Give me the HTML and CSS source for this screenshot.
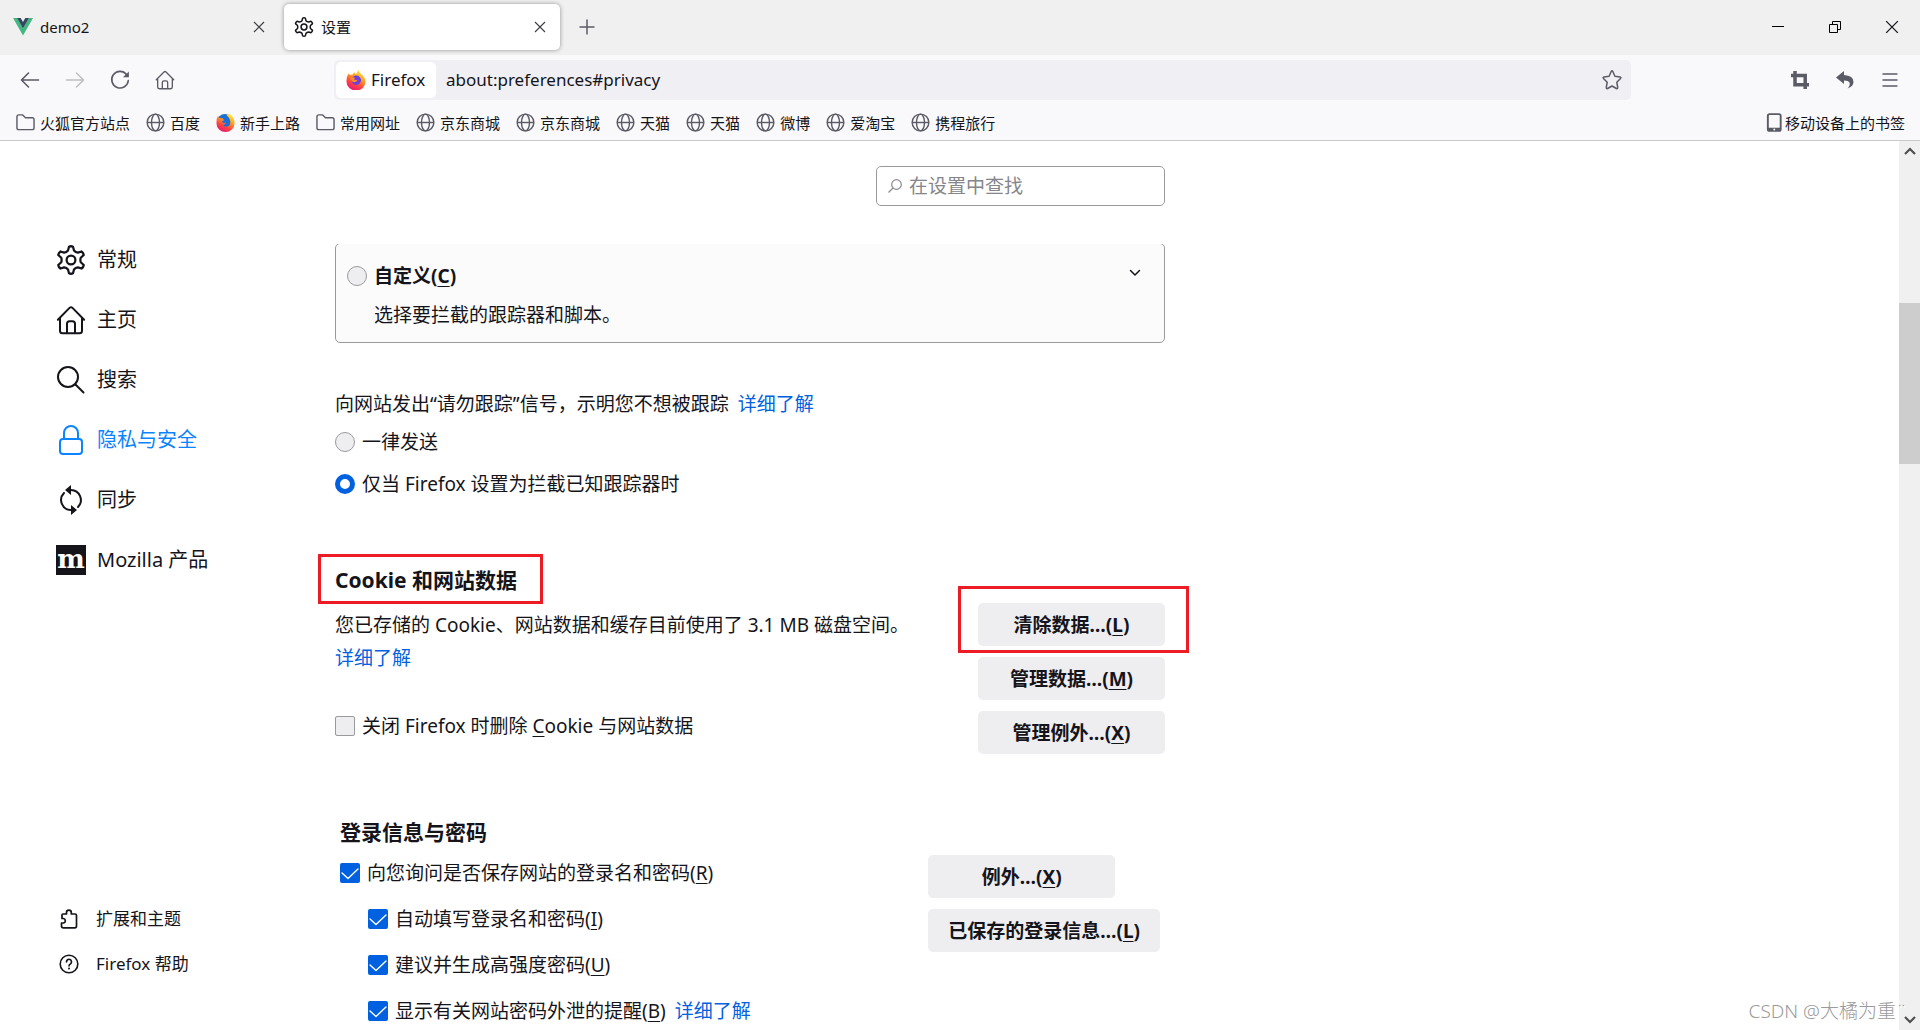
FILE: index.html
```html
<!DOCTYPE html>
<html lang="zh-CN">
<head>
<meta charset="utf-8">
<title>设置</title>
<link rel="stylesheet" href="styles.css">
</head>
<body>
<svg class="defs" aria-hidden="true">
  <defs>
    <linearGradient id="flame" x1="0.8" y1="0" x2="0.3" y2="1">
      <stop offset="0" stop-color="#fff04a"/><stop offset="0.35" stop-color="#ffa722"/><stop offset="0.7" stop-color="#ff4340"/><stop offset="1" stop-color="#e5157c"/>
    </linearGradient>
    <symbol id="gear" viewBox="0 0 24 24"><path fill="none" stroke="currentColor" stroke-width="1.8" stroke-linejoin="round" d="M10.4 1.4Q12 .6 13.6 1.4L14.4 4.4Q15.6 5.8 17.5 6.1L20.4 5.2Q22 6.3 22.2 8L19.8 10.2Q19.2 12 19.8 13.8L22.2 16Q22 17.7 20.4 18.8L17.5 17.9Q15.6 18.2 14.4 19.6L13.6 22.6Q12 23.4 10.4 22.6L9.6 19.6Q8.400 18.2 6.500 17.9L3.600 18.8Q2 17.7 1.800 16L4.200 13.8Q4.800 12 4.200 10.200L1.800 8Q2 6.300 3.600 5.200L6.500 6.100Q8.400 5.800 9.600 4.400Z"/><circle cx="12" cy="12" r="3.500" fill="none" stroke="currentColor" stroke-width="1.800"/></symbol>
    <symbol id="home" viewBox="0 0 24 24"><path fill="none" stroke="currentColor" stroke-width="1.600" stroke-linecap="round" stroke-linejoin="round" d="M1.500 11.800 10.800 2.300Q12 1.200 13.200 2.300L22.500 11.800M3.200 10.500V20.500Q3.200 22.500 5.200 22.500H18.800Q20.800 22.500 20.800 20.500V10.500M8.800 22V15Q8.800 13 10.800 13H13.200Q15.200 13 15.200 15V22"/></symbol>
    <symbol id="globe" viewBox="0 0 20 20"><g fill="none" stroke="#5b5b66" stroke-width="1.500"><circle cx="10" cy="10" r="8.800"/><ellipse cx="10" cy="10" rx="4.200" ry="8.800"/><path d="M1.500 10H18.500"/></g></symbol>
    <symbol id="folder" viewBox="0 0 20 20"><path fill="none" stroke="#5b5b66" stroke-width="1.500" stroke-linejoin="round" d="M1 4Q1 2 3 2H7L10 5H17Q19 5 19 7V15.500Q19 17.500 17 17.500H3Q1 17.500 1 15.500Z"/></symbol>
    <symbol id="cross" viewBox="0 0 12 12"><path fill="none" stroke="currentColor" stroke-width="1.100" d="M1 1 11 11M11 1 1 11"/></symbol>
    <symbol id="firefox" viewBox="0 0 20 20"><path fill="url(#flame)" d="M2.500 3.500Q3.500 4.200 4 5.200 5 4.400 6.500 4.500 7.500 2.600 9 2.200 8.700 3.600 10 4.500 11 2 12.500 0 13 2.500 15.500 4.500 19.500 7.500 19.500 12A9.500 8.800 0 0 1 .5 11.500Q.4 6.500 2.500 3.500Z"/><circle cx="10.300" cy="10.300" r="4.700" fill="#6b3fe0"/><path fill="#ff8a1e" d="M4.500 8Q7 6.600 9.500 8.300 8 8.600 8 9.600 9.500 10.500 11.500 9.500 11 12.500 8 12.200 5.200 12 4.500 8Z"/></symbol>
    <symbol id="firefox-blue" viewBox="0 0 20 20"><circle cx="9.500" cy="9.500" r="8.500" fill="#1b6fd6"/><path fill="url(#flame)" d="M2 3Q2.500 4.500 3.500 5.200L7 5.500 8.500 7.500Q6 8 6.300 9.500 8 11 10.500 10 10 12.500 7.500 12.500 9 15 12 14.300 15.500 13 15 8.500 14.500 5 11 2 13 .8 14 .8 19.800 4.500 19.500 11A9.500 9 0 0 1 .5 11Q0 6.500 2 3Z"/></symbol>
  </defs>
</svg>

<header class="chrome">
  <div class="tabbar">
    <div class="tab">
      <svg class="i20" viewBox="0 0 20 20" aria-hidden="true"><path fill="#41b883" d="M0 1H4L10 11.500 16 1H20L10 18.500Z"/><path fill="#35495e" d="M4 1H7.700L10 5 12.300 1H16L10 11.500Z"/></svg>
      <span class="tab-title">demo2</span>
      <button class="bare tab-close" aria-label="关闭 demo2"><svg class="i12" aria-hidden="true"><use href="#cross"/></svg></button>
    </div>
    <div class="tab tab-active">
      <svg class="i20" aria-hidden="true"><use href="#gear"/></svg>
      <span class="tab-title">设置</span>
      <button class="bare tab-close" aria-label="关闭设置"><svg class="i12" aria-hidden="true"><use href="#cross"/></svg></button>
    </div>
    <button class="bare newtab" aria-label="新标签页"><svg class="i16" viewBox="0 0 16 16"><path fill="none" stroke="#5b5b66" stroke-width="1.500" d="M8 0.500V15.500M.5 8H15.500"/></svg></button>
    <div class="window-controls">
      <button class="bare" aria-label="最小化"><svg class="i14" viewBox="0 0 14 14"><path stroke="#000" d="M1 6.500H13"/></svg></button>
      <button class="bare" aria-label="还原"><svg class="i14" viewBox="0 0 14 14"><path fill="none" stroke="#000" d="M1.500 4.500H9.500V12.500H1.500ZM4.500 4.500V1.500H12.500V9.500H9.500"/></svg></button>
      <button class="bare" aria-label="关闭"><svg class="i14" aria-hidden="true"><use href="#cross"/></svg></button>
    </div>
  </div>

  <div class="toolbar">
    <div class="nav-buttons">
      <button class="bare" aria-label="后退"><svg class="i20" viewBox="0 0 20 20"><path fill="none" stroke="#5b5b66" stroke-width="1.600" stroke-linecap="round" stroke-linejoin="round" d="M18.500 10H1.500M8.500 3 1.500 10 8.500 17"/></svg></button>
      <button class="bare" aria-label="前进" disabled><svg class="i20" viewBox="0 0 20 20"><path fill="none" stroke="#bfbfc4" stroke-width="1.600" stroke-linecap="round" stroke-linejoin="round" d="M1.500 10H18.500M11.500 3 18.500 10 11.500 17"/></svg></button>
      <button class="bare" aria-label="刷新"><svg class="i20" viewBox="0 0 20 20"><path fill="none" stroke="#5b5b66" stroke-width="1.600" stroke-linecap="round" d="M16.500 4.500A8.300 8.300 0 1 0 18.300 10.500"/><path fill="#5b5b66" d="M18.900 1.500V7.300H13Z"/></svg></button>
      <button class="bare" aria-label="主页"><svg class="i20" aria-hidden="true"><use href="#home"/></svg></button>
    </div>
    <div class="urlbar">
      <button class="identity"><svg class="i20" aria-hidden="true"><use href="#firefox"/></svg>Firefox</button>
      <input class="url" type="text" aria-label="地址" value="about:preferences#privacy">
      <button class="bare" aria-label="添加书签"><svg class="i20" viewBox="0 0 20 20"><path fill="none" stroke="#5b5b66" stroke-width="1.500" stroke-linejoin="round" d="M9.200 1.500Q10 .2 10.800 1.500L12.900 6.200 18 6.900Q19.600 7.300 18.500 8.500L14.800 12.200 15.700 17.500Q15.800 19 14.400 18.500L10 16 5.600 18.500Q4.200 19 4.300 17.500L5.200 12.200 1.500 8.500Q.4 7.300 2 6.900L7.100 6.200Z"/></svg></button>
    </div>
    <div class="tools">
      <button class="bare" aria-label="截图"><svg class="i20" viewBox="0 0 20 20"><path fill="none" stroke="#5b5b66" stroke-width="3.500" d="M1 5.500H15.200V19M5 1V14.800H19"/></svg></button>
      <button class="bare" aria-label="撤销"><svg class="i20" viewBox="0 0 20 20"><path fill="#5b5b66" d="M1 7.500 9 1V5Q18.500 5.500 18.500 12 18.300 16.500 12.500 18.500 15.500 15.500 14.500 12.500 13.500 10.500 9 10.500V14Z"/></svg></button>
      <button class="bare" aria-label="菜单"><svg class="i20" viewBox="0 0 20 20"><path stroke="#5b5b66" stroke-width="1.400" stroke-linecap="round" d="M3 4H17M3 10H17M3 16H17"/></svg></button>
    </div>
  </div>

  <nav class="bookmarks" aria-label="书签">
    <a href="#"><svg aria-hidden="true"><use href="#folder"/></svg>火狐官方站点</a>
    <a href="#"><svg aria-hidden="true"><use href="#globe"/></svg>百度</a>
    <a href="#"><svg aria-hidden="true"><use href="#firefox-blue"/></svg>新手上路</a>
    <a href="#"><svg aria-hidden="true"><use href="#folder"/></svg>常用网址</a>
    <a href="#"><svg aria-hidden="true"><use href="#globe"/></svg>京东商城</a>
    <a href="#"><svg aria-hidden="true"><use href="#globe"/></svg>京东商城</a>
    <a href="#"><svg aria-hidden="true"><use href="#globe"/></svg>天猫</a>
    <a href="#"><svg aria-hidden="true"><use href="#globe"/></svg>天猫</a>
    <a href="#"><svg aria-hidden="true"><use href="#globe"/></svg>微博</a>
    <a href="#"><svg aria-hidden="true"><use href="#globe"/></svg>爱淘宝</a>
    <a href="#"><svg aria-hidden="true"><use href="#globe"/></svg>携程旅行</a>
    <a href="#" class="mobile"><svg viewBox="0 0 20 20" aria-hidden="true"><rect x="3" y="1.200" width="13.500" height="17.600" rx="1.800" fill="none" stroke="#5b5b66" stroke-width="2"/><path fill="#5b5b66" d="M3 15.500H16.500V19H3Z"/><circle cx="9.750" cy="17.300" r="1" fill="#fff"/></svg>移动设备上的书签</a>
  </nav>
</header>

<div class="page">
  <aside class="sidebar">
    <nav class="categories" aria-label="类别">
      <a href="#"><svg class="i30" aria-hidden="true"><use href="#gear"/></svg>常规</a>
      <a href="#"><svg class="i30" aria-hidden="true"><use href="#home"/></svg>主页</a>
      <a href="#"><svg class="i30" viewBox="0 0 30 30" aria-hidden="true"><g fill="none" stroke="currentColor" stroke-width="2"><circle cx="12" cy="12" r="10"/><path stroke-linecap="round" d="M19.500 19.500 27.500 27.500"/></g></svg>搜索</a>
      <a href="#" class="selected"><svg class="i30" viewBox="0 0 30 30" aria-hidden="true"><g fill="none" stroke="currentColor" stroke-width="2"><rect x="4" y="14" width="22" height="15" rx="3"/><path d="M8 14V8A7 7 0 0 1 22 8V14"/></g></svg>隐私与安全</a>
      <a href="#"><svg class="i30" viewBox="0 0 30 30" aria-hidden="true"><g fill="none" stroke="currentColor" stroke-width="2" stroke-linecap="round"><path d="M15 5A10 10 0 0 1 22 22"/><path d="M15 25A10 10 0 0 1 8 8"/></g><path fill="currentColor" d="M15 0V10L9 5ZM15 20V30L21 25Z"/></svg>同步</a>
      <a href="#"><span class="moz" aria-hidden="true">m</span>Mozilla 产品</a>
    </nav>
    <nav class="support" aria-label="帮助">
      <a href="#"><svg class="i20" viewBox="0 0 20 20" aria-hidden="true"><path fill="none" stroke="currentColor" stroke-width="1.700" stroke-linejoin="round" d="M3 6Q3 5 4 5H7.500V3.500A2.400 2.400 0 0 1 12.300 3.500V5H16Q17.500 5 17.500 6.500V17Q17.500 18.800 15.800 18.800H4.500Q2.500 18.800 2.500 17V14H4.500A2.300 2.300 0 0 0 4.500 9.500H3Z"/></svg>扩展和主题</a>
      <a href="#"><svg class="i20" viewBox="0 0 20 20" aria-hidden="true"><g fill="none" stroke="currentColor" stroke-width="1.600"><circle cx="10" cy="10" r="8.800"/><path stroke-linecap="round" d="M7.500 8A2.500 2.500 0 1 1 11.500 9.800Q10 10.800 10 12"/></g><circle cx="10" cy="14.500" r="1" fill="currentColor"/></svg>Firefox 帮助</a>
    </nav>
  </aside>

  <main class="content">
    <div class="search-row">
      <label class="search">
        <svg class="i14" viewBox="0 0 14 14" aria-hidden="true"><g fill="none" stroke="#8a8a90" stroke-width="1.200"><circle cx="8.500" cy="5.500" r="4.800"/><path d="M5 9 .5 13.500"/></g></svg>
        <input type="search" placeholder="在设置中查找" aria-label="在设置中查找">
      </label>
    </div>
    <div class="scroll">
      <div class="column">
        <section class="card">
          <div class="card-head">
            <label class="option strong"><input type="radio" name="etp"><span>自定义(<u>C</u>)</span></label>
            <button class="bare" aria-label="展开"><svg class="i12" viewBox="0 0 12 12"><path fill="none" stroke="#15141a" stroke-width="1.500" stroke-linecap="round" stroke-linejoin="round" d="M1.500 3.500 6 8 10.500 3.500"/></svg></button>
          </div>
          <p class="card-desc">选择要拦截的跟踪器和脚本。</p>
        </section>

        <section class="dnt">
          <p>向网站发出“请勿跟踪”信号，示明您不想被跟踪<a class="link after" href="#">详细了解</a></p>
          <label class="option"><input type="radio" name="dnt"><span>一律发送</span></label>
          <label class="option"><input type="radio" name="dnt" checked><span>仅当 Firefox 设置为拦截已知跟踪器时</span></label>
        </section>

        <section class="cookies">
          <h2 class="marked">Cookie 和网站数据</h2>
          <div class="split">
            <div class="cookie-info">
              <p>您已存储的 Cookie、网站数据和缓存目前使用了 3.1 MB 磁盘空间。</p>
              <a class="link" href="#">详细了解</a>
              <label class="option"><input type="checkbox"><span>关闭 Firefox 时删除 <u>C</u>ookie 与网站数据</span></label>
            </div>
            <div class="buttons">
              <div class="marked"><button class="btn">清除数据…(<u>L</u>)</button></div>
              <button class="btn">管理数据…(<u>M</u>)</button>
              <button class="btn">管理例外…(<u>X</u>)</button>
            </div>
          </div>
        </section>

        <section class="logins">
          <h2>登录信息与密码</h2>
          <div class="split">
            <div class="login-options">
              <label class="option"><input type="checkbox" checked><span>向您询问是否保存网站的登录名和密码(<u>R</u>)</span></label>
              <label class="option sub"><input type="checkbox" checked><span>自动填写登录名和密码(<u>I</u>)</span></label>
              <label class="option sub"><input type="checkbox" checked><span>建议并生成高强度密码(<u>U</u>)</span></label>
              <div class="option-line">
                <label class="option sub"><input type="checkbox" checked><span>显示有关网站密码外泄的提醒(<u>B</u>)</span></label>
                <a class="link after" href="#">详细了解</a>
              </div>
            </div>
            <div class="buttons">
              <button class="btn">例外…(<u>X</u>)</button>
              <button class="btn">已保存的登录信息…(<u>L</u>)</button>
            </div>
          </div>
        </section>
      </div>
    </div>
  </main>

  <div class="scrollbar" aria-hidden="true">
    <svg class="i12" viewBox="0 0 12 12"><path fill="none" stroke="#505050" stroke-width="2.200" d="M1 9 6 4 11 9"/></svg>
    <div class="track"><div class="thumb"></div></div>
    <svg class="i12" viewBox="0 0 12 12"><path fill="none" stroke="#505050" stroke-width="2.200" d="M1 3 6 8 11 3"/></svg>
  </div>
</div>
<div class="watermark">CSDN @大橘为重¨</div>
</body>
</html>
```

FILE: styles.css
```css
* { box-sizing: border-box; }

body {
  margin: 0;
  height: 100vh;
  display: flex;
  flex-direction: column;
  overflow: hidden;
  background: #fff;
  color: #15141a;
  font: 19px/28px "Noto Sans", "Noto Sans CJK SC", sans-serif;
}

p, h2 { margin: 0; }
svg { display: block; flex: none; }
a { color: inherit; text-decoration: none; }
button, input { font: inherit; color: inherit; }
u { text-decoration: underline; text-decoration-thickness: 1px; text-underline-offset: 3px; }

.defs { position: absolute; width: 0; height: 0; }
.i12 { width: 12px; height: 12px; }
.i14 { width: 14px; height: 14px; }
.i16 { width: 16px; height: 16px; }
.i20 { width: 20px; height: 20px; }
.i30 { width: 30px; height: 30px; }

.bare { padding: 0; border: 0; background: none; display: flex; }

/* Browser chrome */
.chrome { background: #f9f9fb; border-bottom: 1px solid #c9c9cd; font-size: 15px; }

.tabbar { display: flex; align-items: center; height: 55px; padding-bottom: 1px; background: #f0f0f0; }
.tab {
  display: flex;
  align-items: center;
  gap: 7px;
  width: 276px;
  height: 46px;
  padding: 0 14px 0 13px;
  margin-right: 4px;
  border-radius: 5px;
}
.tab:first-child { width: 280px; padding-right: 15px; }
.tab-active { background: #fff; box-shadow: 0 0 4px rgba(0, 0, 0, .4); padding-left: 10px; }
.tab-title { flex: 1; }
.tab-close { color: #3c3c44; }
.newtab { margin-left: 15px; }
.window-controls { display: flex; gap: 43px; margin-left: auto; padding-right: 21px; }

.toolbar { display: flex; align-items: center; padding-top: 5px; }
.nav-buttons { display: flex; gap: 25px; width: 334px; padding-left: 20px; color: #5b5b66; }
.nav-buttons .bare { color: inherit; }
.urlbar {
  display: flex;
  align-items: center;
  flex: 1;
  height: 40px;
  padding: 2px 9px 2px 2px;
  border-radius: 5px;
  background: #f0f0f4;
  font-size: 17px;
}
.identity {
  display: flex;
  align-items: center;
  gap: 5px;
  height: 36px;
  width: 100px;
  padding: 0 10px;
  border: 0;
  border-radius: 5px;
  background: #fff;
}
.url { flex: 1; border: 0; padding: 0 10px; background: none; outline: 0; }
.tools { display: flex; justify-content: flex-end; gap: 25px; width: 289px; padding-right: 20px; }

.bookmarks { display: flex; gap: 16px; align-items: center; height: 40px; padding: 5px 15px 0 16px; }
.bookmarks a { display: flex; align-items: center; gap: 5px; }
.bookmarks svg { width: 19px; height: 19px; }
.bookmarks .mobile { margin-left: auto; gap: 1px; }

/* Preferences page */
.page { flex: 1; min-height: 0; display: flex; }

.sidebar {
  width: 300px;
  padding: 89px 0 44px 56px;
  display: flex;
  flex-direction: column;
  justify-content: space-between;
}
.categories a { display: flex; align-items: center; gap: 11px; height: 60px; font-size: 20px; }
.categories .selected { color: #0a84ff; }
.moz {
  width: 30px;
  height: 30px;
  background: #15141a;
  color: #fff;
  font: bold 26px/28px "DejaVu Serif", serif;
  text-align: center;
}
.support a { display: flex; align-items: center; gap: 17px; height: 45px; padding-left: 3px; font-size: 17px; }

.content { flex: 1; min-width: 0; display: flex; flex-direction: column; }
.search-row { max-width: 865px; padding: 25px 0 38px 35px; display: flex; justify-content: flex-end; }
.search {
  display: flex;
  align-items: center;
  gap: 7px;
  width: 289px;
  height: 40px;
  padding: 0 11px;
  border: 1px solid #9a9a9e;
  border-radius: 5px;
}
.search input { flex: 1; min-width: 0; padding: 0; border: 0; outline: 0; background: none; }
.search input::placeholder { color: #85858a; opacity: 1; }

.scroll { flex: 1; min-height: 0; overflow: hidden; padding-left: 35px; }
.column { max-width: 830px; }

.card {
  margin-top: -1px;
  padding: 16px 23px 13px 11px;
  border: 1px solid #9a9a9e;
  border-radius: 5px;
  background: #fbfbfb;
}
.card-head { display: flex; justify-content: space-between; height: 32px; }
.card-head .bare { padding-top: 7px; }
.card-desc { margin: 9px 0 0 27px; }

.option { display: flex; align-items: center; gap: 7px; }
.option input {
  appearance: none;
  flex: none;
  width: 20px;
  height: 20px;
  margin: 0;
  border: 1px solid #9a9a9e;
  background: #eeeef0;
}
.option input[type="radio"] { border-radius: 50%; }
.option input[type="radio"]:checked { border: 5px solid #0061e0; background: #fff; }
.option input[type="checkbox"] { border-radius: 2px; }
.option input[type="checkbox"]:checked {
  border: 0;
  background: #0061e0 url("data:image/svg+xml,%3Csvg xmlns='http://www.w3.org/2000/svg' viewBox='0 0 20 20'%3E%3Cpath d='M2 10 8 15.500 18 6' fill='none' stroke='white' stroke-width='1.400' stroke-linecap='round' stroke-linejoin='round'/%3E%3C/svg%3E");
}
.strong { font-weight: bold; }
.link { color: #0061e0; }
.after { margin-left: 9px; }

.dnt { display: flex; flex-direction: column; gap: 14px; margin-top: 47px; }
.dnt p { margin-bottom: -4px; }

h2 { width: fit-content; font-size: 21px; line-height: 28px; font-weight: bold; }

.marked { position: relative; }
.marked::before { content: ""; position: absolute; border: 3px solid #ed1c24; pointer-events: none; }
h2.marked::before { inset: -12px -26px -10px -17px; }
.buttons .marked::before { inset: -17px -24px -7px -20px; }

.split { display: flex; justify-content: space-between; }
.cookies { margin-top: 68px; }
.cookie-info { display: flex; flex-direction: column; align-items: flex-start; gap: 5px; padding-top: 17px; }
.cookie-info .option { margin-top: 35px; }

.buttons { display: flex; flex-direction: column; align-items: flex-start; gap: 11px; padding-top: 9px; }
.btn {
  display: block;
  min-width: 187px;
  height: 43px;
  padding: 0 20px;
  border: 0;
  border-radius: 5px;
  background: #eeeef0;
  font-weight: bold;
}

.logins { margin-top: 64px; padding: 0 5px; }
.login-options { display: flex; flex-direction: column; gap: 18px; padding-top: 13px; }
.sub { margin-left: 28px; }
.option-line { display: flex; }

.scrollbar {
  width: 21px;
  padding: 4px 0;
  display: flex;
  flex-direction: column;
  align-items: center;
  gap: 4px;
  background: #f0f0f0;
}
.track { flex: 1; width: 100%; }
.thumb { height: 19%; margin-top: 142px; background: #cdcdcd; }

.watermark {
  position: absolute;
  right: 13px;
  bottom: 5px;
  color: #9a9a9a;
  font-size: 19px;
  font-weight: 300;
  text-shadow: 1px 1px 0 #fff;
}
```
